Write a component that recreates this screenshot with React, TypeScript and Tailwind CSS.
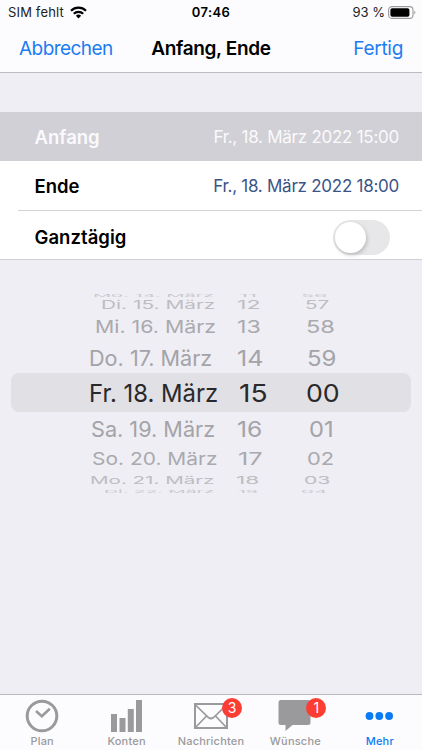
import { useLayoutEffect, useRef, useState } from 'react';
import type { ReactNode } from 'react';

type Cell = { text: string; x: number; w: number };
type PickerRow = { box: string; tone: string; squash: number; cells: Cell[] };

// One entry per visible line of the date wheel, top to bottom.
const rows: PickerRow[] = [
  { box: 'h-[5px]', tone: 'text-[#c9c9ce]', squash: 0.16, cells: [{ text: 'Mo. 14. März', x: 94, w: 120 }, { text: '11', x: 240, w: 17 }, { text: '56', x: 302, w: 25 }] },
  { box: 'h-[15px]', tone: 'text-[#bdbdc2]', squash: 0.5, cells: [{ text: 'Di. 15. März', x: 101.5, w: 113 }, { text: '12', x: 238, w: 22 }, { text: '57', x: 306, w: 23 }] },
  { box: 'h-[29px]', tone: 'text-[#a9a9ae]', squash: 0.76, cells: [{ text: 'Mi. 16. März', x: 95.5, w: 119.5 }, { text: '13', x: 238, w: 23 }, { text: '58', x: 306.5, w: 27.5 }] },
  { box: 'h-[32px]', tone: 'text-[#a3a3a8]', squash: 0.95, cells: [{ text: 'Do. 17. März', x: 90, w: 122 }, { text: '14', x: 237.5, w: 25 }, { text: '59', x: 308, w: 28 }] },
  { box: 'h-[39px]', tone: 'text-[#29292b]', squash: 1.08, cells: [{ text: 'Fr. 18. März', x: 90, w: 127.5 }, { text: '15', x: 239.5, w: 27 }, { text: '00', x: 307, w: 32.5 }] },
  { box: 'h-[32px]', tone: 'text-[#a3a3a8]', squash: 0.95, cells: [{ text: 'Sa. 19. März', x: 92, w: 123 }, { text: '16', x: 237.5, w: 24.5 }, { text: '01', x: 310, w: 23.5 }] },
  { box: 'h-[28px]', tone: 'text-[#a9a9ae]', squash: 0.76, cells: [{ text: 'So. 20. März', x: 93, w: 124.5 }, { text: '17', x: 238.5, w: 23 }, { text: '02', x: 307.5, w: 26.5 }] },
  { box: 'h-[14px]', tone: 'text-[#bdbdc2]', squash: 0.47, cells: [{ text: 'Mo. 21. März', x: 91, w: 123 }, { text: '18', x: 237, w: 22.5 }, { text: '03', x: 304.5, w: 25.5 }] },
  { box: 'h-[8px]', tone: 'text-[#c9c9ce]', squash: 0.16, cells: [{ text: 'Di. 22. März', x: 105, w: 109 }, { text: '19', x: 239, w: 19 }, { text: '04', x: 301.5, w: 25 }] },
];

function WheelText({ text, width, squash }: { text: string; width: number; squash: number }) {
  const ref = useRef<HTMLSpanElement>(null);
  const [stretch, setStretch] = useState(1);
  useLayoutEffect(() => {
    if (ref.current) setStretch((width + 1.2) / ref.current.offsetWidth);
  }, [width]);
  return (
    <span
      ref={ref}
      className="block w-max origin-left text-[23px] leading-none whitespace-nowrap"
      style={{ transform: `scale(${stretch}, ${squash})` }}
    >
      {text}
    </span>
  );
}

function Wheel() {
  return (
    <div className="mt-[32px] flex flex-col">
      {rows.map((row, i) => (
        <div
          key={i}
          className={`${row.box} ${row.tone} ${i === 4 ? 'mx-[11px] rounded-[8px] bg-[#e1e0e5]' : 'px-[11px]'} grid grid-cols-[216px_64px_120px] items-center pt-[2px]`}
        >
          {row.cells.map((cell, c) => (
            <div key={c} className="flex h-0 items-center" style={{ paddingLeft: cell.x - 0.6 - [11, 227, 291][c] }}>
              <WheelText text={cell.text} width={cell.w} squash={row.squash} />
            </div>
          ))}
        </div>
      ))}
    </div>
  );
}

function Tab({ label, active, badge, children }: { label: string; active?: boolean; badge?: string; children: ReactNode }) {
  return (
    <div className={`flex w-[84.4px] flex-col items-center ${active ? 'text-[#0b7bf4]' : 'text-[#9a9a9c]'}`}>
      <div className="relative mt-[4px] h-[35px] w-[36px]">
        {children}
        {badge && (
          <span className="absolute -top-[1px] left-[29px] flex size-[20px] items-center justify-center rounded-full bg-[#fc3d33] text-[14px] leading-none text-white">
            {badge}
          </span>
        )}
      </div>
      <span className="text-[11px] leading-[14px] font-medium tracking-[0.2px]">{label}</span>
    </div>
  );
}

export default function App() {
  return (
    <div className="flex h-[750px] w-[422px] flex-col overflow-hidden bg-[#efeef4] font-['Inter','Liberation_Sans',sans-serif] text-black">
      <header className="h-[73px] border-b border-[#bcbcc0] bg-[#fcfcfe]">
        <div className="grid h-[24px] grid-cols-3 items-center text-[13px] leading-none">
          <div className="flex items-center gap-[6px] pl-[8px] text-[#222]">
            <span className="tracking-[0.15px]">SIM fehlt</span>
            <svg width="17" height="13" viewBox="0 0 17 13" fill="none" stroke="#000" strokeWidth="2.2">
              <path d="M1 4.8a10.6 10.6 0 0 1 15 0" />
              <path d="M3.8 7.8a6.65 6.65 0 0 1 9.4 0" />
              <path d="M8.5 12.4L5.9 9.8a3.7 3.7 0 0 1 5.2 0Z" fill="#000" stroke="none" />
            </svg>
          </div>
          <span className="text-center font-semibold tracking-[0.4px]">07:46</span>
          <div className="flex items-center justify-end gap-[3px] pr-[6px] text-[#222]">
            <span>93 %</span>
            <svg width="28" height="13" viewBox="0 0 28 13">
              <rect x="0.6" y="0.6" width="24.4" height="11.8" rx="3.4" fill="none" stroke="#9b9b9d" strokeWidth="1.1" />
              <rect x="2.4" y="2.3" width="19" height="8.4" rx="1.8" fill="#000" />
              <path d="M26.3 4.4q2.2 2.1 0 4.2z" fill="#9b9b9d" />
            </svg>
          </div>
        </div>
        <div className="grid h-[48px] grid-cols-[1fr_auto_1fr] items-center px-[19px] text-[19px] leading-none">
          <span className="tracking-[-0.55px] text-[#1c7cf2]">Abbrechen</span>
          <h1 className="font-semibold tracking-[-0.35px]">Anfang, Ende</h1>
          <span className="text-right tracking-[-0.3px] text-[#1c7cf2]">Fertig</span>
        </div>
      </header>

      <section className="mt-[39px] bg-white text-[18.5px] leading-none">
        <div className="flex h-[49px] items-center justify-between bg-[#d1d0d6] pt-[1px] pr-[23px] pl-[34.500px] text-[#fafafc]">
          <span className="font-semibold">Anfang</span>
          <span className="text-[17px] tracking-[-0.26px]">Fr., 18. März 2022 15:00</span>
        </div>
        <div className="flex h-[49px] items-center justify-between pt-[2px] pr-[23px] pl-[34.500px]">
          <span className="font-semibold">Ende</span>
          <span className="text-[17px] tracking-[-0.26px] text-[#3b5488]">Fr., 18. März 2022 18:00</span>
        </div>
        <div className="ml-[18px] h-px bg-[#d3d3d6]" />
        <div className="flex h-[49px] items-center justify-between border-b border-[#cfcfd3] pt-[5px] pr-[32px] pb-[1px] pl-[34.500px]">
          <span className="font-semibold tracking-[0.05px]">Ganztägig</span>
          <span className="flex h-[35px] w-[57px] items-center rounded-full bg-[#e7e7e9] p-[2px]">
            <span className="size-[31px] rounded-full bg-white shadow-[1px_2px_4px_rgba(0,0,0,0.2)]" />
          </span>
        </div>
      </section>

      <Wheel />

      <nav className="mt-auto flex h-[56px] border-t border-[#bababe] bg-[#fcfcfe]">
        <Tab label="Plan">
          <svg width="36" height="35" viewBox="0 0 36 35" fill="none" stroke="currentColor">
            <circle cx="18" cy="17" r="14.8" strokeWidth="3" />
            <path d="M12 12l5.8 5.2 8-7.5" strokeWidth="2.6" />
          </svg>
        </Tab>
        <Tab label="Konten">
          <svg width="36" height="35" viewBox="0 0 36 35" fill="currentColor">
            <path d="M2 15h6v18h-6zM10.500 19h6v14h-6zM18.800 10h6v23h-6zM27 1h6v32h-6z" />
          </svg>
        </Tab>
        <Tab label="Nachrichten" badge="3">
          <svg width="36" height="35" viewBox="0 0 36 35" fill="none" stroke="currentColor" strokeWidth="2">
            <rect x="2" y="5" width="32" height="24" />
            <path d="M2 5.500l13.500 13q2.500 2 5 0L34 5.500M2.500 28.500l11-11.500M33.500 28.500l-11-11.500" strokeWidth="1.7" />
          </svg>
        </Tab>
        <Tab label="Wünsche" badge="1">
          <svg width="36" height="35" viewBox="0 0 36 35" fill="currentColor">
            <path d="M4 1h27q2.500 0 2.500 2.500v20q0 2.500-2.500 2.500H15.500L8.500 32v-6H4q-2.500 0-2.500-2.500v-20Q1.500 1 4 1z" />
          </svg>
        </Tab>
        <Tab label="Mehr" active>
          <svg width="36" height="35" viewBox="0 0 36 35" fill="currentColor">
            <circle cx="7.500" cy="17" r="3.900" />
            <circle cx="17.300" cy="17" r="3.900" />
            <circle cx="27.100" cy="17" r="3.900" />
          </svg>
        </Tab>
      </nav>
    </div>
  );
}
